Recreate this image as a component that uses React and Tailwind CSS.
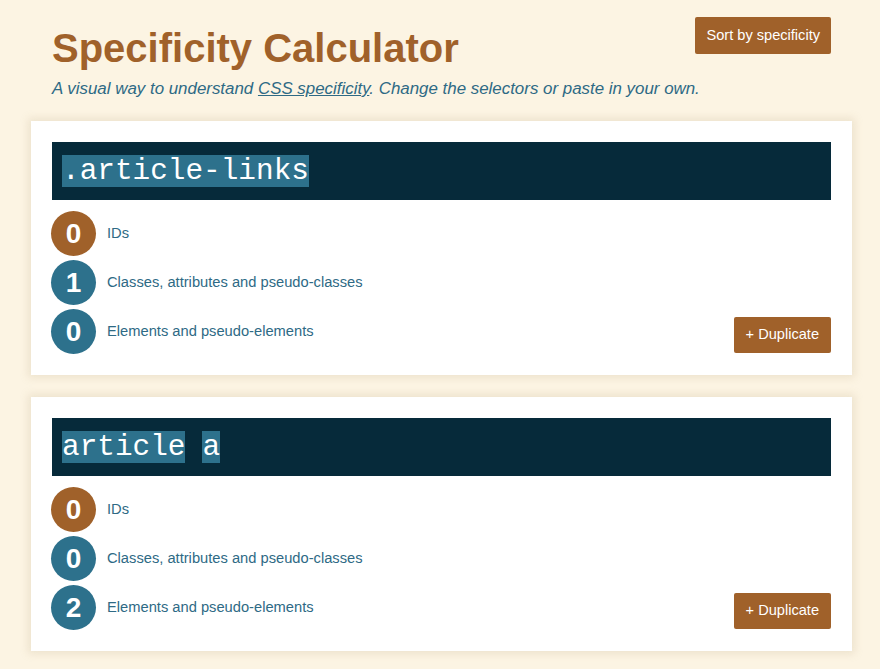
export default function App() {
  const cards = [
    { tokens: [".article-links"], counts: [0, 1, 0] },
    { tokens: ["article", "a"], counts: [0, 0, 2] },
  ];
  const labels = ["IDs", "Classes, attributes and pseudo-classes", "Elements and pseudo-elements"];
  return (
    <div className="min-h-[669px] w-[880px] bg-[#fcf4e3] font-['Liberation_Sans',Arial,sans-serif]">
      <div className="ml-[31px] w-[821px] pt-[17px]">
        <div className="px-[21px]">
          <div className="flex items-start justify-between">
            <h1 className="mt-[7px] whitespace-nowrap text-[40px] font-bold leading-[48px] text-[#a0612a]">Specificity Calculator</h1>
            <button className="h-[37px] shrink-0 whitespace-nowrap rounded-[2px] bg-[#a0612a] px-[11px] text-[14.6px] text-white">Sort by specificity</button>
          </div>
          <p className="mt-[7px] whitespace-nowrap text-[16.9px] italic leading-[20px] text-[#2e6a85]">
            A visual way to understand <span className="underline">CSS specificity</span>. Change the selectors or paste in your own.
          </p>
        </div>
        <div className="mt-[22px] flex flex-col gap-[22px]">
          {cards.map((c, i) => (
            <div key={i} className="bg-white p-[21px] shadow-[0_0_8px_3px_rgba(180,160,120,0.2)]">
              <div className="flex h-[58px] items-center gap-[17px] bg-[#062a3a] px-[10px]">
                {c.tokens.map((t, j) => (
                  <span key={j} className="bg-[#2d718c] pt-[2px] font-['Liberation_Mono',monospace] text-[29.4px] leading-[30px] text-white">{t}</span>
                ))}
              </div>
              <div className="relative mt-[11px] flex flex-col gap-[4px]">
                {c.counts.map((n, k) => (
                  <div key={k} className="flex items-center">
                    <div className={`-ml-[1px] flex h-[45px] w-[45px] items-center justify-center rounded-full text-[28px] font-bold text-white ${k === 0 ? "bg-[#a0612a]" : "bg-[#2d718c]"}`}>{n}</div>
                    <span className="ml-[11px] text-[14.7px] text-[#2e6a85]">{labels[k]}</span>
                  </div>
                ))}
                <button className="absolute bottom-[1px] right-0 h-[36px] rounded-[2px] bg-[#a0612a] px-[12px] text-[14.6px] text-white">+ Duplicate</button>
              </div>
            </div>
          ))}
        </div>
      </div>
    </div>
  );
}
